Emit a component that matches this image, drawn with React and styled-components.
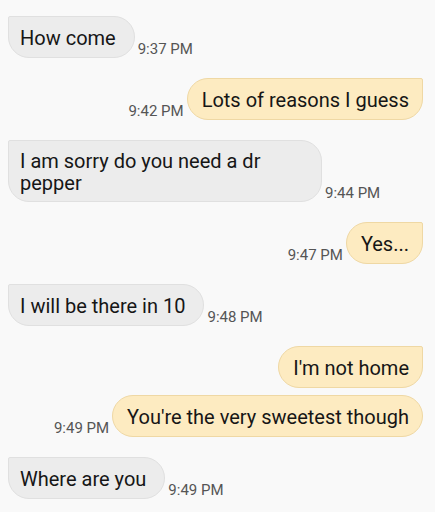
import React from "react";
import styled, { createGlobalStyle, css } from "styled-components";

const Global = createGlobalStyle`
  html, body { margin: 0; padding: 0; background: #f9f9f9; }
  body { font-family: Roboto, "Noto Sans", sans-serif; }
`;

const Thread = styled.div`
  width: 435px;
  height: 512px;
  overflow: hidden;
  box-sizing: border-box;
  padding: 16px 12px 0 8px;
  display: flex;
  flex-direction: column;
  gap: 20px;
`;

const Group = styled.div`
  display: flex;
  flex-direction: column;
  gap: 7px;
`;

const Row = styled.div`
  display: flex;
  align-items: flex-end;
  gap: 2px;
  justify-content: ${(p) => (p.$out ? "flex-end" : "flex-start")};
`;

const Bubble = styled.div`
  box-sizing: border-box;
  min-height: 42px;
  max-width: 314px;
  display: flex;
  align-items: center;
  padding: ${(p) => (p.$out ? "9px 13px 7px 14px" : "9px 18px 7px 11px")};
  font-size: 20px;
  line-height: 22px;
  color: #161616;
  border-radius: 21px;
  background: ${(p) => (p.$out ? "#fdebc1" : "#ececec")};
  border: 1px solid ${(p) => (p.$out ? "#efd8a4" : "#e0e0e0")};
  ${(p) =>
    p.$tail &&
    (p.$out
      ? css`border-top-right-radius: 2px;`
      : css`border-top-left-radius: 2px;`)}
`;

const Time = styled.span`
  font-size: 15px;
  line-height: 15px;
  color: #555555;
  white-space: nowrap;
  margin-bottom: 1px;
  margin-${(p) => (p.$out ? "right" : "left")}: 1px;
`;

const messages = [
  [{ text: "How come", time: "9:37 PM" }],
  [{ text: "Lots of reasons I guess", time: "9:42 PM", out: true }],
  [{ text: "I am sorry do you need a dr pepper", time: "9:44 PM" }],
  [{ text: "Yes...", time: "9:47 PM", out: true }],
  [{ text: "I will be there in 10", time: "9:48 PM" }],
  [
    { text: "I'm not home", out: true },
    { text: "You're the very sweetest though", time: "9:49 PM", out: true },
  ],
  [{ text: "Where are you", time: "9:49 PM" }],
];

export default function App() {
  return (
    <>
      <Global />
      <Thread>
        {messages.map((group, gi) => (
          <Group key={gi}>
            {group.map((m, i) => (
              <Row key={i} $out={m.out}>
                {m.out && m.time && <Time $out>{m.time}</Time>}
                <Bubble $out={m.out} $tail={i === 0}>
                  {m.text}
                </Bubble>
                {!m.out && m.time && <Time>{m.time}</Time>}
              </Row>
            ))}
          </Group>
        ))}
      </Thread>
    </>
  );
}
